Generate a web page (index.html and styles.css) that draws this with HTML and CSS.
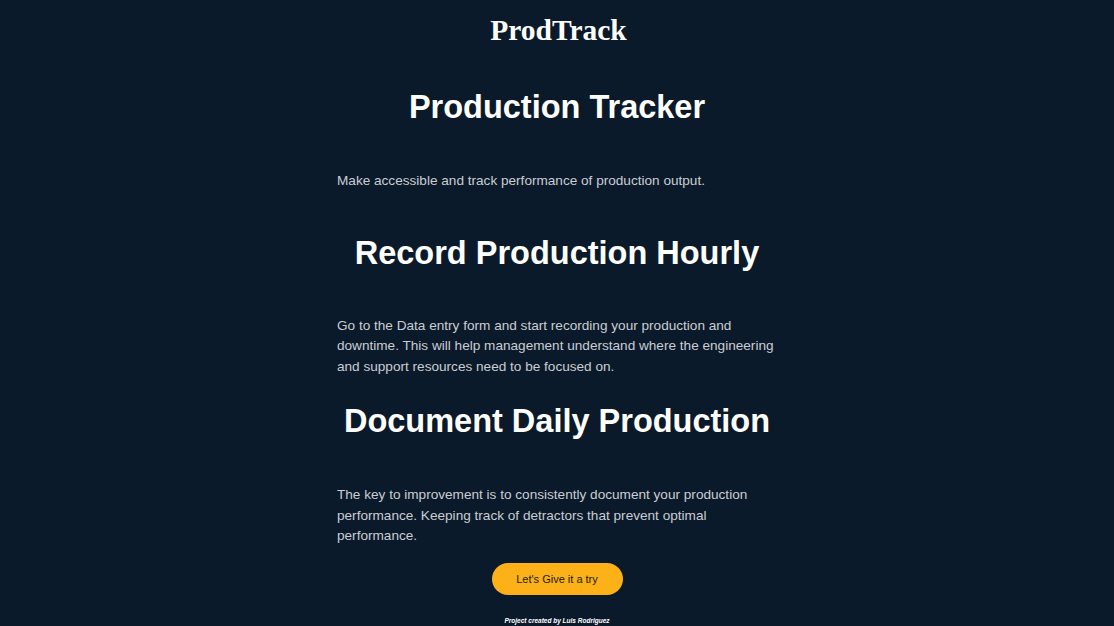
FILE: index.html
```html
<!DOCTYPE html>
<html>
<head>
<meta charset="utf-8">
<link rel="stylesheet" href="styles.css">
</head>
<body>
<header class="brand">ProdTrack</header>
<main class="content">
  <h2 class="heading first">Production Tracker</h2>
  <p class="text gap-lg">Make accessible and track performance of production output.</p>
  <h2 class="heading">Record Production Hourly</h2>
  <p class="text gap-sm">Go to the Data entry form and start recording your production and downtime. This will help management understand where the engineering and support resources need to be focused on.</p>
  <h2 class="heading last">Document Daily Production</h2>
  <p class="text">The key to improvement is to consistently document your production performance. Keeping track of detractors that prevent optimal performance.</p>
  <div class="actions"><button class="cta">Let's Give it a try</button></div>
</main>
<footer class="credit">Project created by Luis Rodriguez</footer>
</body>
</html>
```
FILE: styles.css
```css
html, body {
  margin: 0;
  padding: 0;
  background: #0b1a2a;
  height: 100%;
  overflow: hidden;
}
body {
  font-family: "Liberation Sans", Arial, sans-serif;
  color: #c9cdd3;
}
.brand {
  font-family: "Liberation Serif", "Times New Roman", serif;
  font-weight: bold;
  font-size: 29.5px;
  line-height: 40px;
  padding-top: 10px;
  padding-left: 3px;
  text-align: center;
  color: #ffffff;
}
.content {
  width: 440px;
  margin: 0 auto;
}
.heading {
  margin: 0 0 43px;
  font-size: 32.5px;
  line-height: 40px;
  font-weight: bold;
  color: #ffffff;
  text-align: center;
}
.heading.first {
  margin-top: 37px;
  margin-bottom: 44px;
}
.heading.last {
  margin-bottom: 44px;
}
.text {
  margin: 0;
  font-size: 13.6px;
  line-height: 20.5px;
}
.text.gap-lg {
  margin-bottom: 41px;
}
.text.gap-sm {
  margin-bottom: 24px;
}
.actions {
  display: flex;
  justify-content: center;
  margin-top: 16px;
}
.cta {
  width: 131px;
  height: 32px;
  border: none;
  border-radius: 16px;
  background: #fbb117;
  color: #1a1a1a;
  font-family: "Liberation Sans", Arial, sans-serif;
  font-size: 11px;
  padding: 0;
}
.credit {
  margin-top: 21px;
  text-align: center;
  font-size: 6.5px;
  line-height: 10px;
  font-style: italic;
  font-weight: bold;
  color: #ffffff;
}
```
